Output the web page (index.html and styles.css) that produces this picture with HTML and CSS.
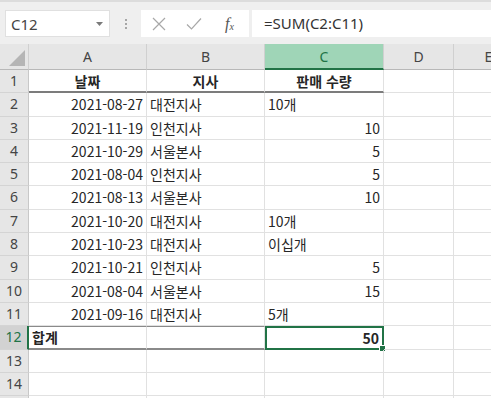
FILE: index.html
```html
<!DOCTYPE html>
<html lang="ko">
  <head>
    <meta charset="UTF-8" />
    <title>판매 수량 합계</title>
    <link rel="stylesheet" href="styles.css">
  </head>
  <body>
    <div class="formula-bar">
      <div class="name-box">
        <span>C12</span>
        <svg class="caret" width="7" height="4" viewBox="0 0 7 4"><path d="M0 0h7L3.5 4z" fill="#7a7a7a"/></svg>
      </div>
      <div class="grip"><i></i><i></i><i></i></div>
      <div class="formula-box">
        <div class="fx-buttons">
          <svg width="14" height="14" viewBox="0 0 14 14"><path d="M1 1l12 12M13 1L1 13" stroke="#a8a8a8" stroke-width="1.2" fill="none"/></svg>
          <svg width="16" height="14" viewBox="0 0 16 14"><path d="M1 7.5l4.5 4.5L15 1.5" stroke="#a8a8a8" stroke-width="1.2" fill="none"/></svg>
          <span class="fx">f<sub>x</sub></span>
        </div>
        <div class="formula-input">=SUM(C2:C11)</div>
      </div>
    </div>

    <div class="sheet">
      <div class="row head">
        <div class="corner"></div>
        <div>A</div><div>B</div><div class="sel">C</div><div>D</div><div>E</div>
      </div>
      <div class="row title">
        <div class="num">1</div>
        <div class="c">날짜</div><div class="c">지사</div><div class="c">판매 수량</div><div></div><div></div>
      </div>
      <div class="row">
        <div class="num">2</div>
        <div class="r">2021-08-27</div><div>대전지사</div><div>10개</div><div></div><div></div>
      </div>
      <div class="row">
        <div class="num">3</div>
        <div class="r">2021-11-19</div><div>인천지사</div><div class="r">10</div><div></div><div></div>
      </div>
      <div class="row">
        <div class="num">4</div>
        <div class="r">2021-10-29</div><div>서울본사</div><div class="r">5</div><div></div><div></div>
      </div>
      <div class="row">
        <div class="num">5</div>
        <div class="r">2021-08-04</div><div>인천지사</div><div class="r">5</div><div></div><div></div>
      </div>
      <div class="row">
        <div class="num">6</div>
        <div class="r">2021-08-13</div><div>서울본사</div><div class="r">10</div><div></div><div></div>
      </div>
      <div class="row">
        <div class="num">7</div>
        <div class="r">2021-10-20</div><div>대전지사</div><div>10개</div><div></div><div></div>
      </div>
      <div class="row">
        <div class="num">8</div>
        <div class="r">2021-10-23</div><div>대전지사</div><div>이십개</div><div></div><div></div>
      </div>
      <div class="row">
        <div class="num">9</div>
        <div class="r">2021-10-21</div><div>인천지사</div><div class="r">5</div><div></div><div></div>
      </div>
      <div class="row">
        <div class="num">10</div>
        <div class="r">2021-08-04</div><div>서울본사</div><div class="r">15</div><div></div><div></div>
      </div>
      <div class="row">
        <div class="num">11</div>
        <div class="r">2021-09-16</div><div>대전지사</div><div>5개</div><div></div><div></div>
      </div>
      <div class="row total">
        <div class="num active">12</div>
        <div class="b">합계</div><div></div><div class="r b current">50<span class="handle"></span></div><div></div><div></div>
      </div>
      <div class="row">
        <div class="num">13</div>
        <div></div><div></div><div></div><div></div><div></div>
      </div>
      <div class="row">
        <div class="num">14</div>
        <div></div><div></div><div></div><div></div><div></div>
      </div>
      <div class="row">
        <div class="num"></div>
        <div></div><div></div><div></div><div></div><div></div>
      </div>
    </div>
  </body>
</html>
```

FILE: styles.css
```css
body {
  margin: 0;
  background: #fff;
  overflow: hidden;
  font-family: "Noto Sans CJK KR", "Noto Sans", sans-serif;
  color: #262626;
}
.formula-bar {
  height: 44px;
  background: #efefef;
  border-top: 2px solid #dcdcdc;
  box-sizing: border-box;
  display: flex;
  align-items: flex-start;
  padding-top: 8px;
}
.name-box {
  margin-left: 5px;
  width: 105px;
  height: 27px;
  box-sizing: border-box;
  background: #fff;
  border: 1px solid #e0e0e0;
  display: flex;
  align-items: center;
  justify-content: space-between;
  padding: 0 6px 0 5px;
  font-family: "Noto Sans", sans-serif;
  font-size: 15px;
  color: #444;
}
.caret {
  margin-top: 1px;
}
.grip {
  width: 31px;
  height: 27px;
  display: flex;
  flex-direction: column;
  align-items: center;
  justify-content: center;
  gap: 2px;
}
.grip i {
  width: 2px;
  height: 2px;
  background: #a6a6a6;
}
.formula-box {
  flex: 1;
  height: 27px;
  display: flex;
  gap: 3px;
}
.fx-buttons {
  width: 108px;
  background: #fff;
  display: flex;
  align-items: center;
  padding-left: 11px;
  box-sizing: border-box;
  gap: 20px;
}
.fx {
  font-family: "Liberation Serif", serif;
  font-style: italic;
  font-size: 16px;
  color: #555;
  margin-left: 3px;
}
.fx sub {
  font-size: 10px;
  vertical-align: -1px;
}
.formula-input {
  flex: 1;
  background: #fff;
  padding-left: 12px;
  font-family: "Noto Sans", sans-serif;
  font-size: 15px;
  line-height: 27px;
  color: #333;
}

.sheet {
  display: flex;
  flex-direction: column;
}
.row {
  display: grid;
  grid-template-columns: 29px 118px 118px 119px 70px 70px;
  height: 23.3px;
  font-size: 14px;
}
.row > div {
  border-right: 1px solid #e1e1e1;
  border-bottom: 1px solid #e1e1e1;
  box-sizing: border-box;
  padding: 0 3px;
  line-height: 22px;
  white-space: nowrap;
  overflow: hidden;
  position: relative;
}
.row.head {
  height: 26px;
  background: #e6e6e6;
}
.row.head > div {
  border-color: #d0d0d0;
  border-bottom-color: #b8b8b8;
  text-align: center;
  font-family: "Noto Sans", sans-serif;
  font-size: 14px;
  color: #444;
  line-height: 25px;
}
.row.head > .sel {
  background: #9fd5b7;
  border-bottom: 2px solid #217346;
  color: #217346;
}
.corner::after {
  content: "";
  position: absolute;
  right: 3px;
  bottom: 3px;
  border-style: solid;
  border-width: 0 0 16px 16px;
  border-color: transparent transparent #b5b5b5 transparent;
}
.row > .num {
  background: #e6e6e6;
  border-right-color: #c8c8c8;
  border-bottom-color: #d4d4d4;
  text-align: center;
  font-family: "Noto Sans", sans-serif;
  color: #444;
  padding: 0;
}
.row > .num.active {
  background: #d2d2d2;
  color: #217346;
  border-right: 2px solid #217346;
}
.c {
  text-align: center;
  font-weight: bold;
}
.r {
  text-align: right;
}
.b {
  font-weight: bold;
}
.title > div:nth-child(-n+4):not(.num) {
  border-bottom: 2px solid #7c7c7c;
}
.total > div:nth-child(-n+4):not(.num) {
  border-top: 1px solid #8a8a8a;
  border-bottom: 2px solid #8a8a8a;
  line-height: 20px;
}
.row.total > div.current {
  border: 2px solid #217346;
  overflow: visible;
}
.handle {
  position: absolute;
  right: -4px;
  bottom: -4px;
  width: 5px;
  height: 5px;
  background: #217346;
  border: 1px solid #fff;
}
```
